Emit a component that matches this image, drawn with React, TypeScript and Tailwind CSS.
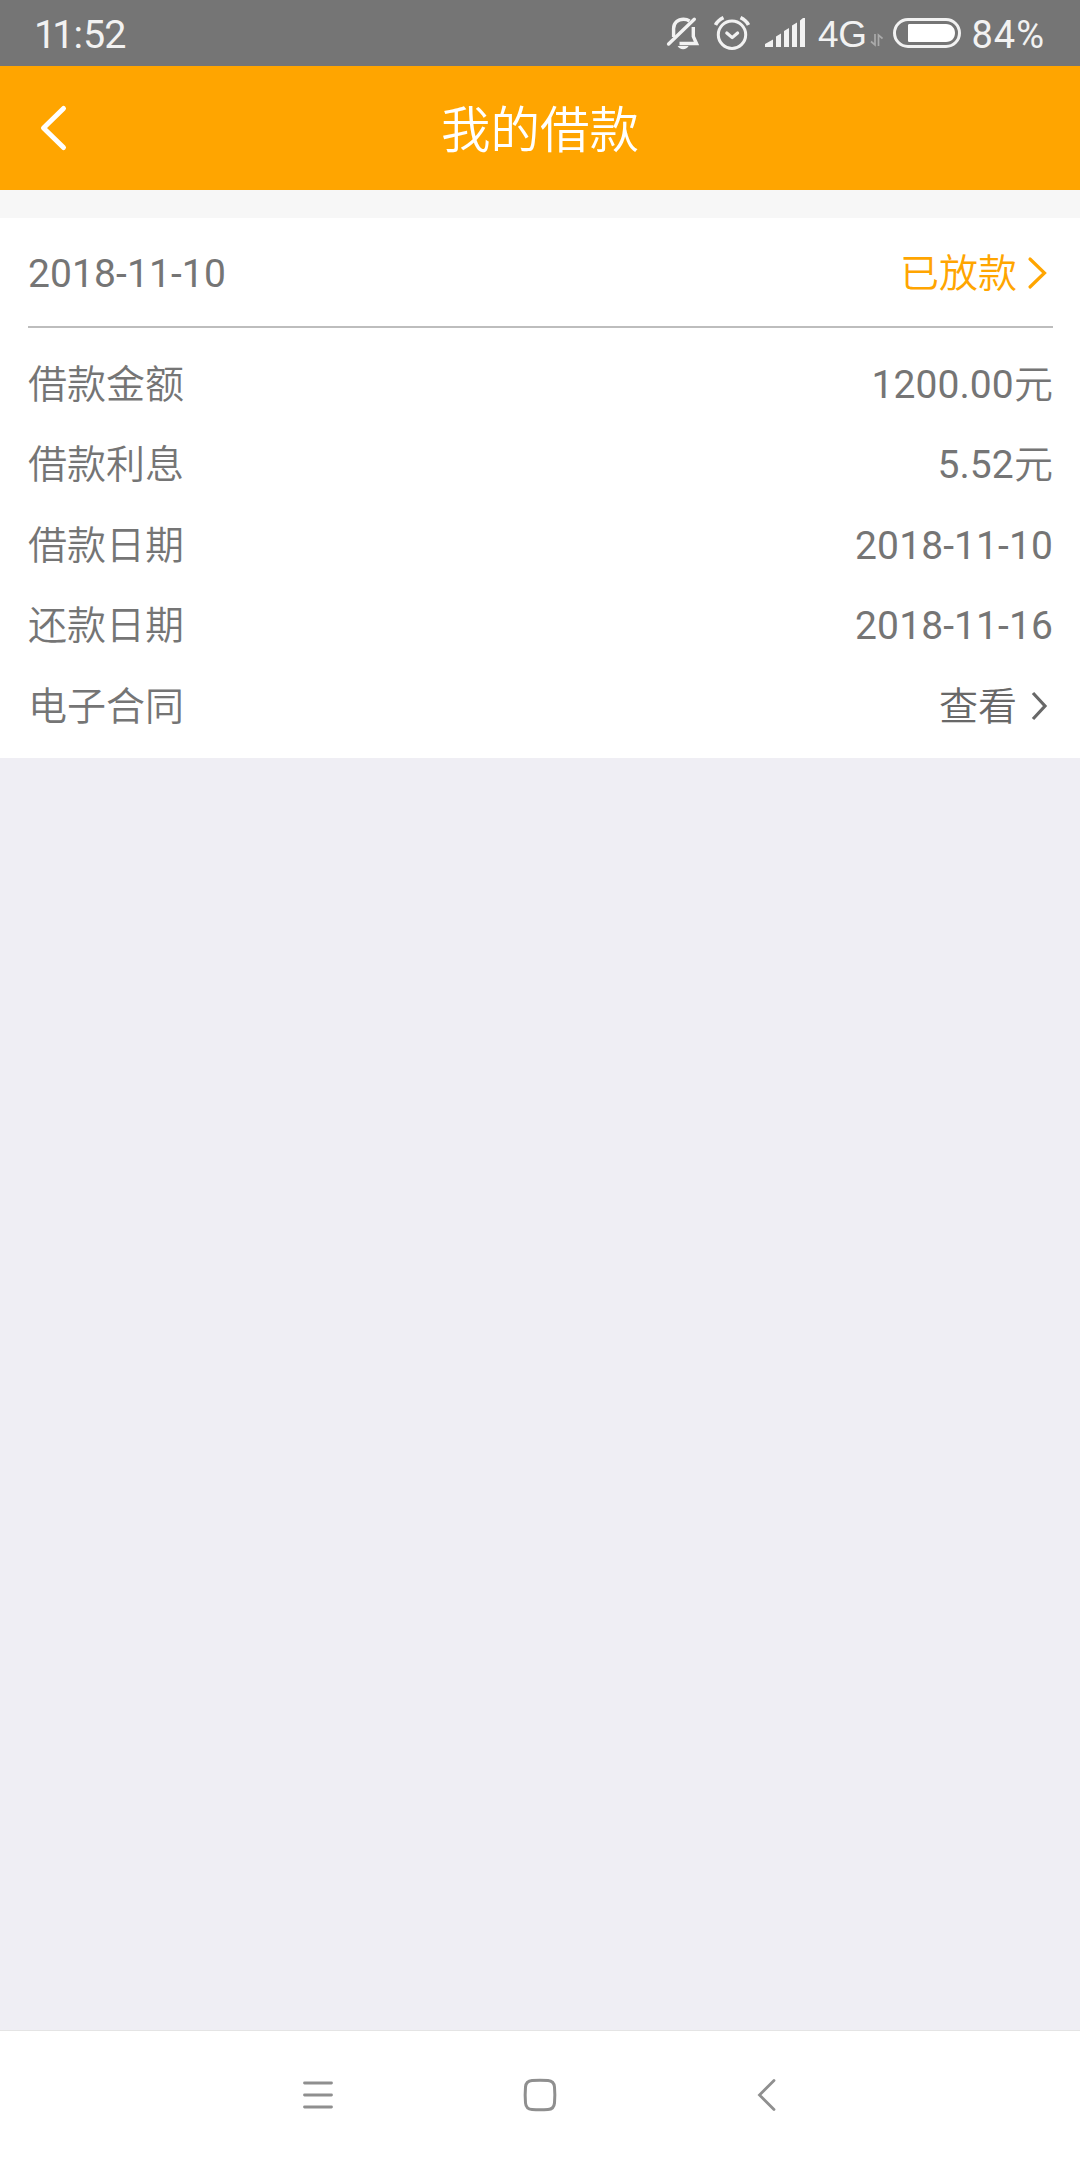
import type { ReactNode } from 'react';

type Row = {
  label: string;
  value: string;
  unit?: string;
};

const rows: Row[] = [
  { label: '借款金额', value: '1200.00', unit: '元' },
  { label: '借款利息', value: '5.52', unit: '元' },
  { label: '借款日期', value: '2018-11-10' },
  { label: '还款日期', value: '2018-11-16' },
];

function StatusBar() {
  return (
    <div className="h-[66px] bg-[#757575] flex items-center text-[#f2f2f2] leading-none">
      <div className="ml-[34px] pt-1 text-[39.5px] flex">
        <span className="tracking-[-4px]">11</span>
        <span className="ml-[3px]">:</span>
        <span className="tracking-[-1px]">52</span>
      </div>

      {/* Muted bell */}
      <svg className="ml-auto w-9 h-[66px]" viewBox="0 0 36 66" fill="none" stroke="currentColor">
        <path
          strokeWidth="3.4"
          d="M7.600 37V28.500c0-5.400 4.200-9.300 9.900-9.300 2.300 0 4.300.6 6 1.800M27.300 27v9.500l3.200 7H13.500"
        />
        <path strokeWidth="3.4" strokeLinecap="round" d="M2.600 44 28.300 19.300" />
        <path fill="currentColor" stroke="none" d="M11.600 46h11c-1 2-3 3.200-5.500 3.200S12.600 48 11.600 46Z" />
      </svg>

      {/* Alarm */}
      <svg className="ml-3 w-9 h-[66px]" viewBox="0 0 36 66" fill="none" stroke="currentColor" strokeLinecap="round">
        <circle cx="18" cy="34.7" r="13.7" strokeWidth="3" />
        <path strokeWidth="3.2" strokeLinejoin="round" d="m12.800 33 5.400 4.600 5.400-4.600" />
        <path strokeWidth="3.6" strokeLinecap="butt" d="M1.500 25C3.200 21.600 6 19.200 9.500 17.600M34.500 25c-1.700-3.400-4.500-5.800-8-7.400" />
      </svg>

      {/* Signal strength */}
      <svg className="ml-[15px] w-10 h-[66px]" viewBox="0 0 40 66" fill="currentColor">
        <path d="M0 47v-3l8-4.500V47ZM11 47V36.500l5-3V47ZM19 47V31l5-3v19ZM27 47V25.500l5-3V47ZM35 47V20.500l3-2.500h2v29Z" />
      </svg>

      <span className="ml-[13px] pt-[3px] text-[37px] tracking-[-0.5px] font-['Liberation_Sans']">4G</span>

      {/* Data arrows */}
      <svg className="ml-1 w-[13px] h-[66px] text-[#aaaaaa]" viewBox="0 0 13 66" fill="none" stroke="currentColor" strokeWidth="1.7">
        <path d="M5 34v11L1 41.500M8.500 46V35l4 3.500" />
      </svg>

      {/* Battery */}
      <svg className="ml-[10px] w-[68px] h-[66px]" viewBox="0 0 68 66" fill="none">
        <rect x="1.5" y="19.5" width="65" height="27" rx="13.5" stroke="currentColor" strokeWidth="3" />
        <path fill="white" d="M16.500 24H53c5.500 0 9 4 9 9s-3.500 9-9 9H16.500c-1 0-1.500-.5-1.500-1.500v-15c0-1 .5-1.500 1.500-1.500Z" />
      </svg>

      <span className="ml-[10px] mr-[35px] pt-[3px] text-[38px] tracking-[1px]">84%</span>
    </div>
  );
}

function InfoRow({ label, children }: { label: string; children: ReactNode }) {
  return (
    <div className="h-[80.5px] flex items-center justify-between">
      <span className="pt-0.5 font-[350]">{label}</span>
      <span className="flex items-center">{children}</span>
    </div>
  );
}

export default function App() {
  return (
    <div className="w-[1080px] h-[2160px] flex flex-col overflow-hidden bg-[#efeef4] text-[39px] text-[#757575] font-['Roboto','Noto_Sans_CJK_SC',sans-serif]">
      <StatusBar />

      {/* Header */}
      <header className="h-[124px] bg-[#ffa500] grid grid-cols-[80px_1fr_80px] items-center text-white">
        <svg className="ml-[38px] w-8 h-[52px]" viewBox="0 0 32 52" fill="none" stroke="currentColor" strokeWidth="5" strokeLinecap="round" strokeLinejoin="round">
          <path d="M25.500 6.500 5.500 26l20 19.500" />
        </svg>
        <h1 className="pt-2 text-center text-[49.5px] font-[350] leading-none">我的借款</h1>
      </header>

      <div className="h-7 bg-[#f7f7f7]" />

      {/* Loan card */}
      <section className="h-[540px] bg-white pl-[28px] pr-[27px]">
        <div className="h-[110px] pt-0.5 border-b-2 border-[#bdbdbd] flex items-center justify-between">
          <span className="pt-[3px] tracking-[0.1px]">2018-11-10</span>
          <span className="flex items-center text-[#ffa500]">
            <span className="pt-[3px] font-[350]">已放款</span>
            <svg className="ml-[9px] mr-[3px] w-6 h-9" viewBox="0 0 24 36" fill="none" stroke="currentColor" strokeWidth="3.2" strokeLinecap="round">
              <path d="m4 4 14.500 14L4 32" />
            </svg>
          </span>
        </div>
        <div className="pt-[15.5px]">
          {rows.map((row) => (
            <InfoRow key={row.label} label={row.label}>
              <span className="pt-0.5 tracking-[0.1px]">
                {row.value}
                {row.unit && <span className="font-[350]">{row.unit}</span>}
              </span>
            </InfoRow>
          ))}
          <InfoRow label="电子合同">
            <span className="pt-0.5 font-[350] text-[#686868]">查看</span>
            <svg className="ml-[9px] mr-[3px] w-6 h-9 text-[#686868]" viewBox="0 0 24 36" fill="none" stroke="currentColor" strokeWidth="3.2">
              <path d="m7 5 12 13L7 31" />
            </svg>
          </InfoRow>
        </div>
      </section>

      {/* System navigation */}
      <nav className="mt-auto h-[130px] pb-0.5 border-t border-[#e4e4e4] bg-white flex items-center justify-center gap-[186px] text-[#8f8f8f]">
        <svg className="w-9 h-9" viewBox="0 0 36 36" fill="none" stroke="currentColor" strokeWidth="2.8" strokeLinecap="round">
          <path d="M4.500 6h27M4.500 18h27M4.500 30h27" />
        </svg>
        <svg className="w-9 h-9" viewBox="0 0 36 36" fill="none" stroke="currentColor" strokeWidth="3">
          <path d="M10 3.500q8-.7 16 0 6 .5 6.500 6.500.7 8 0 16-.5 6-6.500 6.500-8 .7-16 0-6-.5-6.500-6.500-.7-8 0-16 .5-6 6.500-6.500Z" />
        </svg>
        <svg className="w-9 h-9" viewBox="0 0 36 36" fill="none" stroke="currentColor" strokeWidth="2.8" strokeLinecap="round">
          <path d="M30 3.500 15.500 18 30 32.500" />
        </svg>
      </nav>
    </div>
  );
}
